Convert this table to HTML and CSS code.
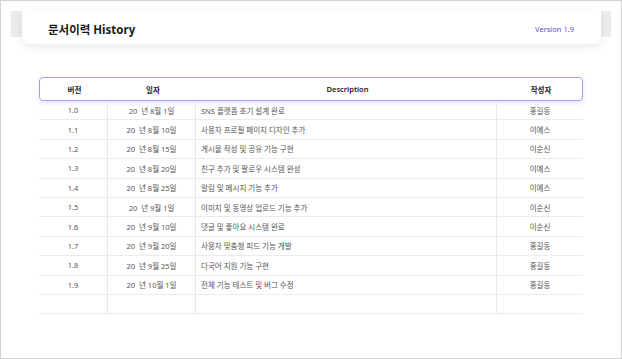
FILE: index.html
```html
<!DOCTYPE html>
<html lang="ko">
<head>
    <meta charset="UTF-8">
    <meta name="viewport" content="width=device-width, initial-scale=1.0">
    <title>문서이력 History</title>
    <link rel="stylesheet" href="styles.css">
</head>
<body>
    <div class="frame">
        <div class="header-band">
            <div class="header-card">
                <h1>문서이력 History</h1>
                <span class="version">Version 1.9</span>
            </div>
        </div>

        <div class="history">
            <div class="row head">
                <div class="cell">버전</div>
                <div class="cell">일자</div>
                <div class="cell">Description</div>
                <div class="cell">작성자</div>
            </div>
            <div class="row">
                <div class="cell">1.0</div>
                <div class="cell">20&nbsp;&nbsp;년 8월 1일</div>
                <div class="cell desc">SNS 플랫폼 초기 설계 완료</div>
                <div class="cell">홍길동</div>
            </div>
            <div class="row">
                <div class="cell">1.1</div>
                <div class="cell">20&nbsp;&nbsp;년 8월 10일</div>
                <div class="cell desc">사용자 프로필 페이지 디자인 추가</div>
                <div class="cell">이예스</div>
            </div>
            <div class="row">
                <div class="cell">1.2</div>
                <div class="cell">20&nbsp;&nbsp;년 8월 15일</div>
                <div class="cell desc">게시물 작성 및 공유 기능 구현</div>
                <div class="cell">이순신</div>
            </div>
            <div class="row">
                <div class="cell">1.3</div>
                <div class="cell">20&nbsp;&nbsp;년 8월 20일</div>
                <div class="cell desc">친구 추가 및 팔로우 시스템 완성</div>
                <div class="cell">이예스</div>
            </div>
            <div class="row">
                <div class="cell">1.4</div>
                <div class="cell">20&nbsp;&nbsp;년 8월 25일</div>
                <div class="cell desc">알림 및 메시지 기능 추가</div>
                <div class="cell">이예스</div>
            </div>
            <div class="row">
                <div class="cell">1.5</div>
                <div class="cell">20&nbsp;&nbsp;년 9월 1일</div>
                <div class="cell desc">이미지 및 동영상 업로드 기능 추가</div>
                <div class="cell">이순신</div>
            </div>
            <div class="row">
                <div class="cell">1.6</div>
                <div class="cell">20&nbsp;&nbsp;년 9월 10일</div>
                <div class="cell desc">댓글 및 좋아요 시스템 완료</div>
                <div class="cell">이순신</div>
            </div>
            <div class="row">
                <div class="cell">1.7</div>
                <div class="cell">20&nbsp;&nbsp;년 9월 20일</div>
                <div class="cell desc">사용자 맞춤형 피드 기능 개발</div>
                <div class="cell">홍길동</div>
            </div>
            <div class="row">
                <div class="cell">1.8</div>
                <div class="cell">20&nbsp;&nbsp;년 9월 25일</div>
                <div class="cell desc">다국어 지원 기능 구현</div>
                <div class="cell">홍길동</div>
            </div>
            <div class="row">
                <div class="cell">1.9</div>
                <div class="cell">20&nbsp;&nbsp;년 10월 1일</div>
                <div class="cell desc">전체 기능 테스트 및 버그 수정</div>
                <div class="cell">홍길동</div>
            </div>
            <div class="row">
                <div class="cell"></div>
                <div class="cell"></div>
                <div class="cell desc"></div>
                <div class="cell"></div>
            </div>
        </div>
    </div>
</body>
</html>
```

FILE: styles.css
```css
* {
    box-sizing: border-box;
    margin: 0;
    padding: 0;
}

body {
    background-color: white;
    font-family: "Noto Sans", "Noto Sans CJK KR", sans-serif;
}

.frame {
    width: 622px;
    height: 359px;
    border: 1px solid #d2d2d2;
    padding-top: 10px;
    overflow: hidden;
}

.header-band {
    margin: 0 10px;
    height: 26px;
    background: linear-gradient(to right, #ebebeb, #f6f6f6 30%, #f6f6f6 70%, #ebebeb);
}

.header-card {
    margin: 0 10px 0 11px;
    height: 33px;
    background-color: white;
    border-radius: 0 0 7px 7px;
    box-shadow: 0 3px 8px rgba(0, 0, 0, 0.08);
    display: flex;
    align-items: center;
    justify-content: space-between;
    padding: 3px 27px 0 26px;
}

.header-card h1 {
    font-size: 11.5px;
    font-weight: 700;
    color: #1a1a1a;
}

.version {
    font-size: 7.5px;
    color: #5f4bd8;
}

.history {
    width: 544px;
    margin: 40px 0 0 38px;
}

.row {
    display: grid;
    grid-template-columns: 69px 88px 301px 86px;
    height: 19.4px;
    border-bottom: 1px solid #ebebeb;
    font-size: 7.5px;
    color: #555;
}

.row .cell {
    display: flex;
    align-items: center;
    justify-content: center;
    border-right: 1px solid #e8e8e8;
}

.row .cell:last-child {
    border-right: none;
}

.row .desc {
    justify-content: flex-start;
    padding-left: 5px;
}

.row.head {
    height: 24px;
    border: 1px solid #a99df2;
    border-radius: 4px;
    box-shadow: 0 2px 5px rgba(110, 90, 220, 0.18);
    color: #222;
    font-weight: 600;
}

.row.head .cell {
    border-right: none;
    justify-content: center;
    padding-left: 0;
}
```
